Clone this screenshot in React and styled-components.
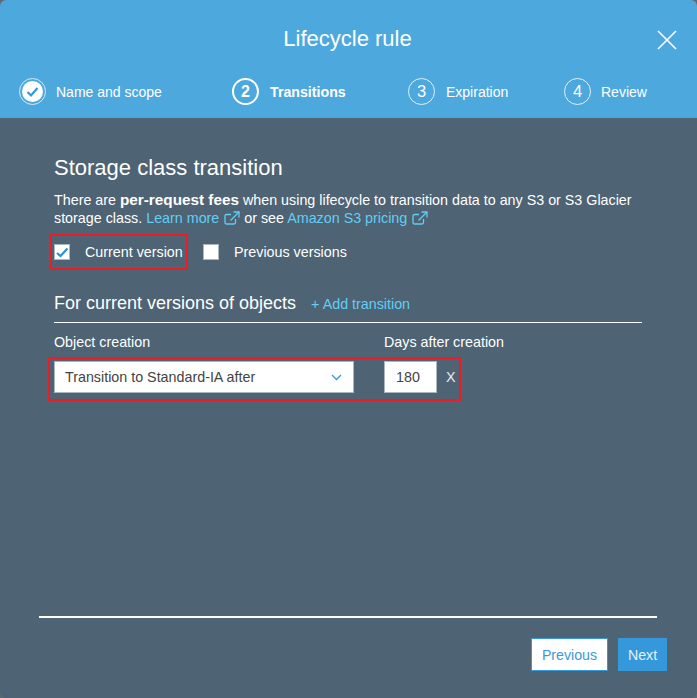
import React from 'react';
import styled, { createGlobalStyle } from 'styled-components';

const GlobalStyle = createGlobalStyle`
  html, body {
    margin: 0;
    padding: 0;
    background: #5d6a72;
  }
  * {
    box-sizing: border-box;
  }
`;

const Modal = styled.div`
  width: 697px;
  height: 698px;
  display: flex;
  flex-direction: column;
  border-radius: 6px;
  overflow: hidden;
  background: #4e6373;
  color: #fff;
  font-family: 'Liberation Sans', Arial, sans-serif;
  font-size: 14.3px;
`;

const Header = styled.header`
  position: relative;
  height: 118px;
  flex-shrink: 0;
  background: #4da8dd;
`;

const Title = styled.h2`
  margin: 0;
  padding: 25px 2px 0 0;
  height: 78px;
  font-size: 22px;
  line-height: 27px;
  font-weight: 400;
  text-align: center;
`;

const CloseButton = styled.button`
  position: absolute;
  top: 30px;
  left: 657px;
  width: 20px;
  height: 20px;
  padding: 0;
  border: 0;
  background: none;
  cursor: pointer;

  svg {
    display: block;
  }
`;

const Stepper = styled.ol`
  display: flex;
  margin: 0;
  padding: 0 0 0 19px;
  list-style: none;
`;

const Step = styled.li`
  display: flex;
  align-items: center;
  gap: ${(props) => props.$gap}px;
  width: ${(props) => props.$width}px;
  height: 27px;
  font-size: ${(props) => (props.$active ? '14.2px' : '14px')};
  font-weight: ${(props) => (props.$active ? 700 : 400)};
`;

const StepNumber = styled.span`
  display: flex;
  align-items: center;
  justify-content: center;
  width: 27px;
  height: 27px;
  flex-shrink: 0;
  border-radius: 50%;
  border: ${(props) => (props.$active ? '2px solid #fff' : '1px solid #e2f1fa')};
  font-size: ${(props) => (props.$active ? '16px' : '16.5px')};
`;

const DoneIcon = styled.svg`
  display: block;
  flex-shrink: 0;
`;

const Content = styled.main`
  flex: 1;
  padding: 38px 55px 0 54px;
`;

const Heading = styled.h3`
  margin: 0 0 11px;
  font-size: 22px;
  line-height: 24px;
  font-weight: 400;
`;

const Intro = styled.p`
  margin: 0;
  font-size: 14.3px;
  line-height: 18px;
`;

const Strong = styled.strong`
  font-size: 15.3px;
  font-weight: 700;
`;

const TextLink = styled.a`
  color: #63cdf4;
  text-decoration: none;
`;

const ExternalIcon = styled.svg`
  display: inline-block;
  margin-left: 5px;
  vertical-align: -2px;
`;

const CheckRow = styled.div`
  display: flex;
  align-items: center;
  margin: 7px 0 0 -4px;
`;

const Marked = styled.div`
  display: flex;
  border: 2px solid #ed1c24;
`;

const CheckMarked = styled(Marked)`
  align-items: center;
  width: 138px;
  height: 36px;
  padding-left: 2px;
`;

const CheckLabel = styled.label`
  display: flex;
  align-items: center;
  gap: 15px;
  white-space: nowrap;
`;

const PlainCheck = styled(CheckLabel)`
  margin-left: 15px;
`;

const CheckBox = styled.span`
  display: flex;
  align-items: center;
  justify-content: center;
  width: 16px;
  height: 16px;
  background: #fff;
  border: 1px solid #aab7c1;
`;

const SectionHead = styled.div`
  display: flex;
  align-items: baseline;
  gap: 15px;
  margin-top: 22px;
  padding-bottom: 8px;
  border-bottom: 1px solid #fff;
`;

const SectionTitle = styled.h4`
  margin: 0;
  font-size: 18px;
  line-height: 22px;
  font-weight: 400;
`;

const FieldLabels = styled.div`
  display: flex;
  margin-top: 11px;
  line-height: 16px;
`;

const FieldLabel = styled.span`
  width: ${(props) => props.$width}px;
`;

const FieldRow = styled(Marked)`
  width: 413px;
  height: 44px;
  margin: 7px 0 0 -6px;
  padding: 2px 0 0 4px;
`;

const Select = styled.div`
  display: flex;
  align-items: center;
  justify-content: space-between;
  width: 300px;
  height: 32px;
  padding: 0 11px 0 10px;
  background: #fff;
  border: 1px solid #aab7c1;
  color: #444;
`;

const NumberField = styled.div`
  width: 53px;
  height: 32px;
  margin-left: 30px;
  padding-left: 11px;
  line-height: 30px;
  background: #fff;
  border: 1px solid #aab7c1;
  color: #444;
`;

const RemoveText = styled.span`
  margin-left: 9px;
  line-height: 32px;
  color: #e8ecef;
`;

const Footer = styled.footer`
  height: 82px;
  flex-shrink: 0;
  margin: 0 40px 0 39px;
  padding-top: 20px;
  border-top: 2px solid #fff;
`;

const FooterButtons = styled.div`
  display: flex;
  justify-content: flex-end;
  gap: 10px;
  margin-right: -10px;
`;

const Button = styled.button`
  height: 33px;
  width: ${(props) => props.$width}px;
  padding: 0;
  font: inherit;
  font-size: 14.2px;
  color: ${(props) => (props.$primary ? '#e4f3fb' : '#3b99d8')};
  background: ${(props) => (props.$primary ? '#3498db' : '#fff')};
  border: 1px solid #3498db;
  cursor: pointer;
`;

const External = () => (
  <ExternalIcon width="16" height="14" viewBox="0 0 16 14" fill="none" stroke="#63cdf4" strokeWidth="1.3">
    <path d="M11.5 8v3.5a1.5 1.5 0 0 1-1.5 1.5H2.5A1.5 1.5 0 0 1 1 11.5V5a1.5 1.5 0 0 1 1.5-1.5H7" />
    <path d="M9.5 1h5.500v5.500" />
    <path d="M15 1L6.500 9.500" />
  </ExternalIcon>
);

const steps = [
  { label: 'Name and scope', width: 213, gap: 10, done: true },
  { label: 'Transitions', number: 2, width: 176, gap: 11, active: true },
  { label: 'Expiration', number: 3, width: 156, gap: 11 },
  { label: 'Review', number: 4, width: 100, gap: 10 },
];

const App = () => (
  <>
    <GlobalStyle />
    <Modal>
      <Header>
        <Title>Lifecycle rule</Title>
        <CloseButton aria-label="Close">
          <svg width="20" height="20" viewBox="0 0 20 20" stroke="#fff" strokeWidth="1.6">
            <path d="M1 1l18 18M19 1L1 19" />
          </svg>
        </CloseButton>
        <Stepper>
          {steps.map((step) => (
            <Step key={step.label} $width={step.width} $gap={step.gap} $active={step.active}>
              {step.done ? (
                <DoneIcon width="27" height="27" viewBox="0 0 27 27">
                  <circle cx="13.500" cy="13.500" r="13" fill="none" stroke="#d5ebf8" strokeWidth="1" />
                  <circle cx="13.500" cy="13.500" r="10.500" fill="#fff" />
                  <path d="M8.500 14l3.500 3.500 6.500-7.500" fill="none" stroke="#3498db" strokeWidth="2.200" />
                </DoneIcon>
              ) : (
                <StepNumber $active={step.active}>{step.number}</StepNumber>
              )}
              {step.label}
            </Step>
          ))}
        </Stepper>
      </Header>
      <Content>
        <Heading>Storage class transition</Heading>
        <Intro>
          There are <Strong>per-request fees</Strong> when using lifecycle to transition data to any S3 or S3 Glacier
          storage class. <TextLink href="#">Learn more<External /></TextLink> or see{' '}
          <TextLink href="#">Amazon S3 pricing<External /></TextLink>
        </Intro>
        <CheckRow>
          <CheckMarked>
            <CheckLabel>
              <CheckBox>
                <svg width="13" height="11" viewBox="0 0 13 11" fill="none" stroke="#2c8fdc" strokeWidth="2.200">
                  <path d="M1 6l3.500 3L11.500 1.500" />
                </svg>
              </CheckBox>
              Current version
            </CheckLabel>
          </CheckMarked>
          <PlainCheck>
            <CheckBox />
            Previous versions
          </PlainCheck>
        </CheckRow>
        <SectionHead>
          <SectionTitle>For current versions of objects</SectionTitle>
          <TextLink href="#">+ Add transition</TextLink>
        </SectionHead>
        <FieldLabels>
          <FieldLabel $width={330}>Object creation</FieldLabel>
          <FieldLabel $width={200}>Days after creation</FieldLabel>
        </FieldLabels>
        <FieldRow>
          <Select>
            Transition to Standard-IA after
            <svg width="11" height="7" viewBox="0 0 11 7" fill="none" stroke="#3498db" strokeWidth="1.300">
              <path d="M1 1l4.500 4.500L10 1" />
            </svg>
          </Select>
          <NumberField>180</NumberField>
          <RemoveText>X</RemoveText>
        </FieldRow>
      </Content>
      <Footer>
        <FooterButtons>
          <Button $width={77}>Previous</Button>
          <Button $width={49} $primary>Next</Button>
        </FooterButtons>
      </Footer>
    </Modal>
  </>
);

export default App;
